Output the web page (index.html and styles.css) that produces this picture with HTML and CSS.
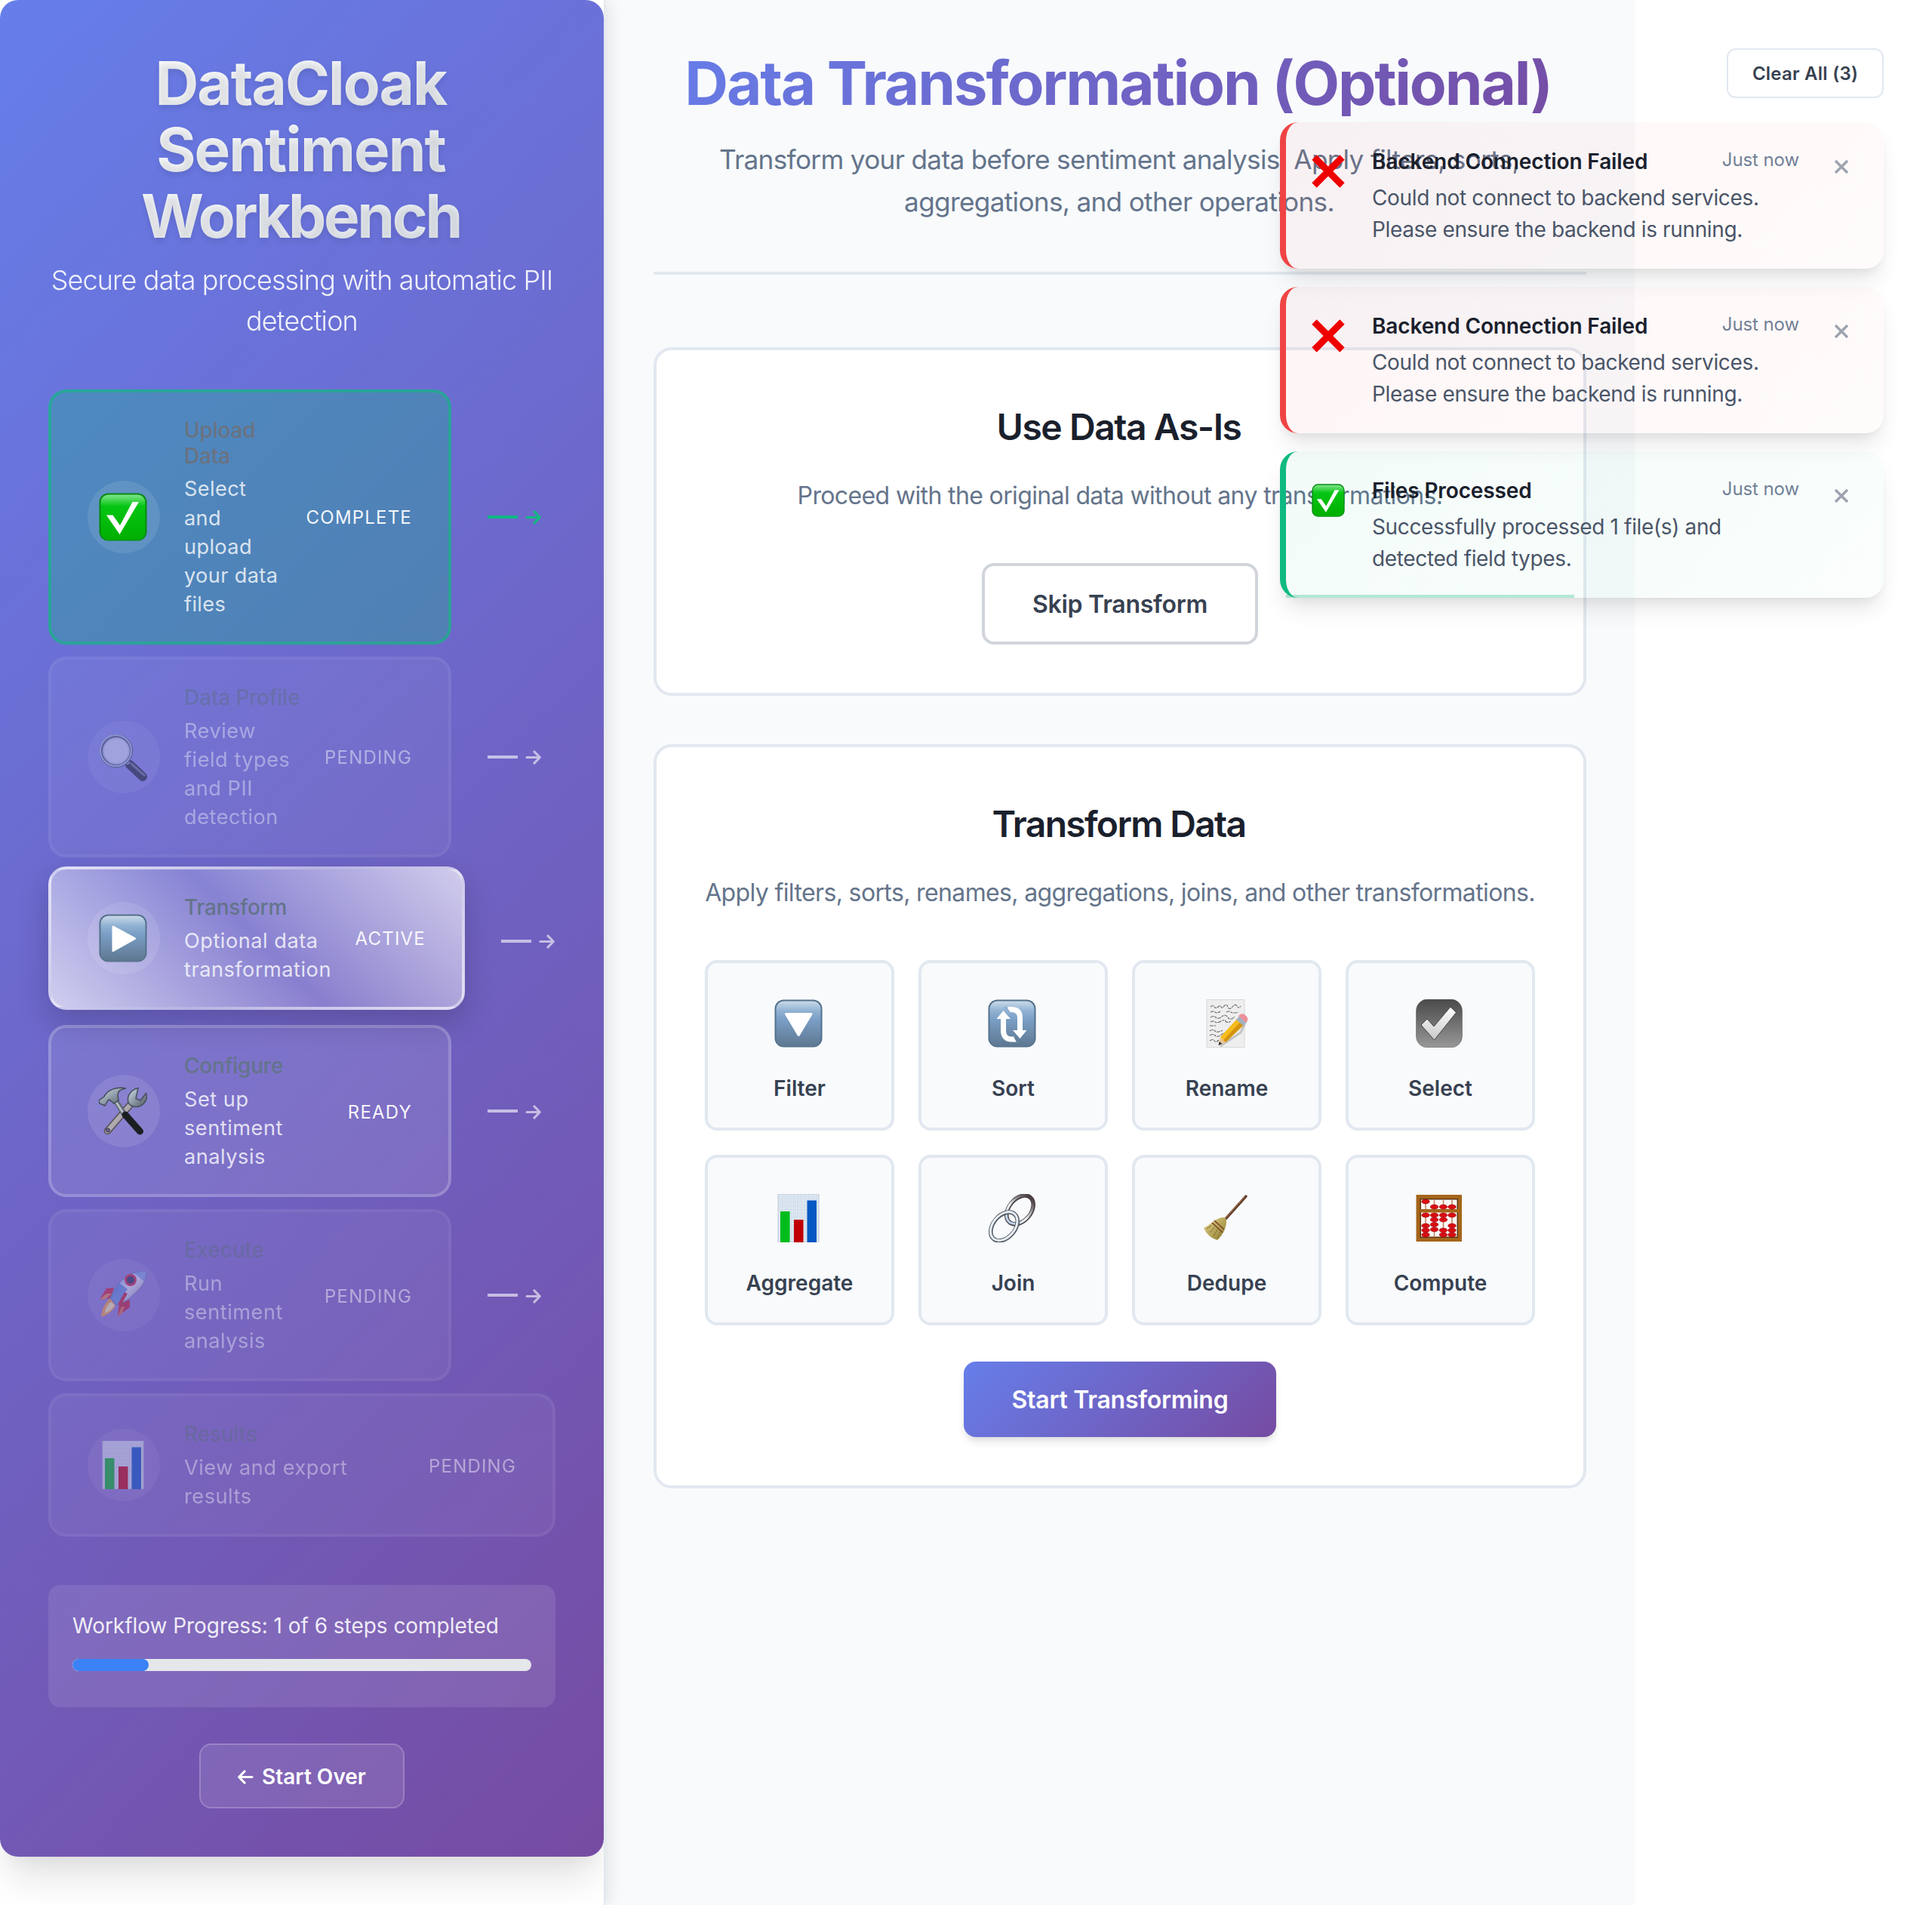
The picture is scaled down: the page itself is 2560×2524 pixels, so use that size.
FILE: index.html
```html
<!DOCTYPE html>
<html lang="en">
<head>
<meta charset="utf-8">
<title>DataCloak Sentiment Workbench</title>
<link rel="stylesheet" href="styles.css">
</head>
<body>
<svg class="sprite" aria-hidden="true">
  <defs>
    <linearGradient id="g-green" x1="0" y1="0" x2="0" y2="1"><stop offset="0" stop-color="#7fe58a"/><stop offset=".25" stop-color="#06c614"/><stop offset="1" stop-color="#00ae00"/></linearGradient>
    <linearGradient id="g-blue" x1="0" y1="0" x2="0" y2="1"><stop offset="0" stop-color="#c9dae8"/><stop offset=".22" stop-color="#8fb1d2"/><stop offset=".4" stop-color="#7b9fc6"/><stop offset="1" stop-color="#5d7790"/></linearGradient>
    <linearGradient id="g-gray" x1="0" y1="0" x2="0" y2="1"><stop offset="0" stop-color="#4a4a4a"/><stop offset="1" stop-color="#989898"/></linearGradient>
    <linearGradient id="g-tick" x1="0" y1="0" x2="0" y2="1"><stop offset="0" stop-color="#fff"/><stop offset="1" stop-color="#c8c8c8"/></linearGradient>
    <linearGradient id="g-steel" x1="0" y1="0" x2="1" y2="1"><stop offset="0" stop-color="#cfe0ea"/><stop offset=".5" stop-color="#8d9aa5"/><stop offset="1" stop-color="#4d5560"/></linearGradient>
    <linearGradient id="g-chrome" x1="0" y1="0" x2="1" y2="0"><stop offset="0" stop-color="#b9cfe6"/><stop offset=".4" stop-color="#f2f5f8"/><stop offset=".75" stop-color="#85868c"/><stop offset="1" stop-color="#4a3c3c"/></linearGradient>
    <linearGradient id="g-broom" x1="0" y1="0" x2="1" y2="1"><stop offset="0" stop-color="#e3d58a"/><stop offset="1" stop-color="#8f7a30"/></linearGradient>
    <linearGradient id="g-hull" x1="0" y1="0" x2="1" y2="1"><stop offset="0" stop-color="#4f8be0"/><stop offset=".5" stop-color="#e6ebf5"/><stop offset="1" stop-color="#6c7490"/></linearGradient>
    <pattern id="p-grid" width="2.5" height="2.5" patternUnits="userSpaceOnUse"><rect width="2.5" height="2.5" fill="#e4eef7"/><path d="M0 0H2.5M0 0V2.5" stroke="#b4c6d6" stroke-width=".7"/></pattern>

    <symbol id="i-check" viewBox="0 0 64 64">
      <rect x=".5" y=".5" width="63" height="63" rx="12" fill="#068a12"/>
      <rect x="2.5" y="2.5" width="59" height="60" rx="10" fill="url(#g-green)"/>
      <path d="M10 29.5h8.500L28 43 44.500 12H53L27.500 55z" fill="#fff"/>
    </symbol>
    <symbol id="i-search" viewBox="0 0 64 64">
      <path d="M41 42 58 58" stroke="#23262f" stroke-width="12" stroke-linecap="round"/>
      <path d="M43 41 60 56" stroke="#6a7286" stroke-width="3" stroke-linecap="round"/>
      <path d="M35 36 40 41" stroke="#8c93a5" stroke-width="5"/>
      <circle cx="23" cy="24" r="20" fill="#d3d9ea" stroke="#4f586c" stroke-width="4.500"/>
      <circle cx="22.500" cy="23.500" r="20.500" fill="none" stroke="#a9bdd6" stroke-width="2"/>
      <circle cx="23" cy="24" r="16.500" fill="none" stroke="#bcc4da" stroke-width="1.500"/>
    </symbol>
    <symbol id="i-play" viewBox="0 0 64 64">
      <rect x=".5" y=".5" width="63" height="63" rx="12" fill="#53718c"/>
      <rect x="2.500" y="2.500" width="59" height="60" rx="10" fill="url(#g-blue)"/>
      <path d="M19 17 47.500 32.500 19 48.500z" fill="#fff" stroke="#fff" stroke-width="3" stroke-linejoin="round"/>
    </symbol>
    <symbol id="i-tools" viewBox="0 0 64 64">
      <path d="M43 22 11.500 58.500" stroke="#554f52" stroke-width="9.500" stroke-linecap="round"/>
      <path d="M43 22 11.500 58.500" stroke="#aeaab0" stroke-width="6.500" stroke-linecap="round"/>
      <circle cx="12" cy="57.500" r="2.600" fill="#6b6090" stroke="#403c44"/>
      <path d="M52 1.500C42 4 36 13 39.500 21.500c4 6.500 14 6 18.500 2 4.500-4 7-9 4.500-15l-7.500 9.500-6-2.500z" fill="url(#g-steel)" stroke="#46505c" stroke-width="1.500"/>
      <path d="M22 18 36 40" stroke="#5f6870" stroke-width="7"/>
      <path d="M21.500 18 35 39" stroke="#b4bec6" stroke-width="3"/>
      <path d="M35 37 54.500 59" stroke="#1c1f22" stroke-width="9" stroke-linecap="round"/>
      <path d="M0 18 7 13C11 5 22-1 36 2c-7 1-11 4-11 9l1 7-6 4-6-5-2 1-4 7-7-3z" fill="url(#g-steel)" stroke="#434c56" stroke-width="1.500"/>
    </symbol>
    <symbol id="i-rocket" viewBox="0 0 64 64">
      <path d="M20 22 10 23 1 38l15-2z" fill="#d2222f"/><path d="M10 30 1 38l8-1 8-7z" fill="#e88a4a"/>
      <path d="M41 38v10L25 60l2-17z" fill="#c31e2c"/><path d="M30 47 25 60l6-4 3-9z" fill="#e07038"/>
      <path d="M15 36C8 42 4 50 3 61c7-2 15-7 19-15z" fill="#f4a63a"/><path d="M16 41c-5 4-7 8-8 15 5-2 10-5 13-11z" fill="#fff0a8"/>
      <path d="M63 0C47 0 36 6 27 16 22 22 18 30 15 36l9 9c8-3 17-8 22-14C57 22 63 13 63 0z" fill="url(#g-hull)" stroke="#6b7694"/>
      <path d="M27 16c-5 6-9 14-12 20l9 9 14-21z" fill="#3e77cf" opacity=".75"/>
      <path d="M63 0C57 0 52 1 47 3l13 11c2-4 3-9 3-14z" fill="#4b84dc" opacity=".6"/>
      <circle cx="42" cy="12" r="6.500" fill="#2b2f4e" stroke="#cf2335" stroke-width="3"/>
      <path d="M36 29 27 45" stroke="#c31e2c" stroke-width="4.500"/>
    </symbol>
    <symbol id="i-chart" viewBox="0 0 64 64">
      <rect x="5" y="0" width="54" height="64" fill="url(#p-grid)" stroke="#c4cdd5"/>
      <path d="M8 23h12.500v41H8z" fill="#00bd1c"/><path d="M26 34h12.500v30H26z" fill="#c00004"/><path d="M43.500 8.500H56V64H43.500z" fill="#0557c2"/>
    </symbol>
    <symbol id="i-filter" viewBox="0 0 64 64">
      <rect x=".5" y=".5" width="63" height="63" rx="12" fill="#53718c"/>
      <rect x="2.500" y="2.500" width="59" height="60" rx="10" fill="url(#g-blue)"/>
      <path d="M15.500 19.500h33.500L32.200 47.500z" fill="#fff" stroke="#fff" stroke-width="3" stroke-linejoin="round"/>
    </symbol>
    <symbol id="i-sort" viewBox="0 0 64 64">
      <rect x=".5" y=".5" width="63" height="63" rx="12" fill="#53718c"/>
      <rect x="2.500" y="2.500" width="59" height="60" rx="10" fill="url(#g-blue)"/>
      <path d="M20.500 24v18c0 7 4 11 11.500 11h6M42.500 42V24c0-7-4-10-10-10.500h-6" fill="none" stroke="#fff" stroke-width="7"/>
      <path d="M11.500 26 20.500 15l9.500 11zM33 41h18.500L42.500 52z" fill="#fff"/>
      <path d="M22 10l6 8" stroke="#8fb1d2" stroke-width="4"/>
      <path d="M36 49l5 9" stroke="#64809b" stroke-width="4"/>
    </symbol>
    <symbol id="i-memo" viewBox="0 0 64 64">
      <path d="M7 .5h50v63H7z" fill="#eeeeee" stroke="#d8d8d8"/>
      <path d="M12 10q3-3 5 0t5 0 4 0 4-1 5 1 6 0 6-1 5 0M12 17q3-2 6 0t7-1M33 17q3-2 6 0t10 0M12 24q4-3 7 0t8-1 8 1 9-1M12 30q3-2 6 0t8-1 6 0 8 0M11 35h8M11 42q4-3 7 0t10-1M11 48q4-3 7 0t8-1 6 0M11 55q4-3 6 0t6-1" fill="none" stroke="#666" stroke-width="1.100" stroke-dasharray="5 1 3 1"/>
      <path d="M25 62 52 44 60 27" stroke="#999" stroke-width="3" fill="none" opacity=".5"/>
      <path d="M22.500 60.500 25 50 32 57z" fill="#e9c691"/><path d="M22.500 61l1-5 4 3z" fill="#333"/>
      <path d="M25 50 47 26l9 8L32 57z" fill="#f7bc1c"/><path d="M29 54 51.500 30l4.500 4-24 23z" fill="#d59410"/>
      <path d="M46 27l4-4.500 9 8-3.500 4.500z" fill="#9fb3c4"/><path d="M49 22c4-4 7-3 10 0s3 5 0 9z" fill="#ee8f98"/>
    </symbol>
    <symbol id="i-select" viewBox="0 0 64 64">
      <rect x="1.500" width="61" height="64" rx="15" fill="url(#g-gray)" stroke="#555" stroke-width=".5"/>
      <path d="M8 34l8-8L25 36 47 10l7.500 7.500L25.500 54z" fill="url(#g-tick)" stroke="#444" stroke-width="1"/>
    </symbol>
    <symbol id="i-link" viewBox="0 0 64 64">
      <g fill="none">
        <ellipse cx="42.500" cy="21" rx="21.500" ry="14.500" stroke="#4a4246" stroke-width="5.500" transform="rotate(-50 42.500 21)"/>
        <ellipse cx="42.200" cy="20.600" rx="21.500" ry="14.500" stroke="url(#g-chrome)" stroke-width="3" transform="rotate(-50 42.200 20.600)"/>
        <ellipse cx="21.500" cy="43" rx="21.500" ry="14.500" stroke="#50565f" stroke-width="5.500" transform="rotate(-50 21.500 43)"/>
        <ellipse cx="21.200" cy="42.600" rx="21.500" ry="14.500" stroke="#e6edf4" stroke-width="3" transform="rotate(-50 21.200 42.600)"/>
      </g>
    </symbol>
    <symbol id="i-broom" viewBox="0 0 64 64">
      <path d="M59 3 31 34" stroke="#5b3826" stroke-width="3.400" stroke-linecap="round"/><path d="M58 3 31 33" stroke="#9a6746" stroke-width="1.200"/>
      <path d="M28 31q5 0 5 5c0 8-4 18-12 25C14 59 7 54 3 45c8-3 15-13 25-14z" fill="url(#g-broom)"/>
      <path d="M17 35 30 47M14 38 28 51" stroke="#7a4423" stroke-width="1.600"/>
      <path d="M7 46l6-4M11 51l6-7M16 56l5-9M21 59l4-9" stroke="#85712e" stroke-width="1"/>
    </symbol>
    <symbol id="i-abacus" viewBox="0 0 64 64">
      <path d="M1.500 1h60.500v62H1.500z" fill="#a4651b"/><path d="M6.500 6h50.500v52H6.500z" fill="#5c3610"/><path d="M8 7.500h47.500v49H8z" fill="#fbf8f6"/>
      <path d="M14 7v50M25.500 7v50M37.500 7v50M49 7v50" stroke="#c08767" stroke-width="1.600"/>
      <path d="M6.500 20h50.500v4.500H6.500z" fill="#a4651b"/>
      <g fill="#d90d12" stroke="#9c0408" stroke-width=".6">
        <ellipse cx="14" cy="10" rx="5.300" ry="2.900"/><ellipse cx="25.500" cy="17" rx="5.300" ry="2.900"/><ellipse cx="37.500" cy="17" rx="5.300" ry="2.900"/><ellipse cx="49" cy="17" rx="5.300" ry="2.900"/>
        <ellipse cx="14" cy="28" rx="5.300" ry="2.900"/><ellipse cx="25.500" cy="28" rx="5.300" ry="2.900"/><ellipse cx="37.500" cy="28" rx="5.300" ry="2.900"/><ellipse cx="49" cy="28" rx="5.300" ry="2.900"/>
        <ellipse cx="25.500" cy="34" rx="5.300" ry="2.900"/><ellipse cx="37.500" cy="34" rx="5.300" ry="2.900"/><ellipse cx="25.500" cy="40.500" rx="5.300" ry="2.900"/><ellipse cx="25.500" cy="47" rx="5.300" ry="2.900"/>
        <ellipse cx="14" cy="42" rx="5.300" ry="2.900"/><ellipse cx="14" cy="48" rx="5.300" ry="2.900"/><ellipse cx="14" cy="54" rx="5.300" ry="2.900"/>
        <ellipse cx="37.500" cy="48" rx="5.300" ry="2.900"/><ellipse cx="37.500" cy="54" rx="5.300" ry="2.900"/>
        <ellipse cx="49" cy="42" rx="5.300" ry="2.900"/><ellipse cx="49" cy="48" rx="5.300" ry="2.900"/><ellipse cx="49" cy="54" rx="5.300" ry="2.900"/>
      </g>
    </symbol>
    <symbol id="i-cross" viewBox="0 0 44 44">
      <path d="M3.500 3.500 40.500 40.500M40.500 3.500 3.500 40.500" stroke="#ee0000" stroke-width="9"/>
    </symbol>
    <symbol id="i-close" viewBox="0 0 20 20">
      <path d="M2 2 18 18M18 2 2 18" stroke="#9ca3af" stroke-width="3.400"/>
    </symbol>
    <symbol id="i-arrow" viewBox="0 0 22 20">
      <path d="M2 10H20M12.500 2 20.300 10 12.500 18" fill="none" stroke="currentColor" stroke-width="3.200" stroke-linecap="round" stroke-linejoin="round"/>
    </symbol>
  </defs>
</svg>

<aside class="sidebar">
  <div class="workflow">
    <h1 class="brand">DataCloak Sentiment <span>Workbench</span></h1>
    <p class="tagline">Secure data processing with automatic PII detection</p>

    <div class="steps">
      <div class="row">
        <div class="step complete">
          <span class="bubble"><svg class="icon"><use href="#i-check"/></svg></span>
          <div class="info"><h3>Upload Data</h3><p>Select and upload your data files</p></div>
          <span class="status">COMPLETE</span>
        </div>
        <div class="link done"><i></i><svg><use href="#i-arrow"/></svg></div>
      </div>
      <div class="row">
        <div class="step pending">
          <span class="bubble"><svg class="icon"><use href="#i-search"/></svg></span>
          <div class="info"><h3 class="single">Data Profile</h3><p>Review field types and PII detection</p></div>
          <span class="status">PENDING</span>
        </div>
        <div class="link"><i></i><svg><use href="#i-arrow"/></svg></div>
      </div>
      <div class="row">
        <div class="step active">
          <span class="bubble"><svg class="icon"><use href="#i-play"/></svg></span>
          <div class="info"><h3>Transform</h3><p>Optional data transformation</p></div>
          <span class="status">ACTIVE</span>
        </div>
        <div class="link"><i></i><svg><use href="#i-arrow"/></svg></div>
      </div>
      <div class="row">
        <div class="step">
          <span class="bubble"><svg class="icon"><use href="#i-tools"/></svg></span>
          <div class="info"><h3>Configure</h3><p>Set up sentiment analysis</p></div>
          <span class="status">READY</span>
        </div>
        <div class="link"><i></i><svg><use href="#i-arrow"/></svg></div>
      </div>
      <div class="row">
        <div class="step pending">
          <span class="bubble"><svg class="icon"><use href="#i-rocket"/></svg></span>
          <div class="info"><h3>Execute</h3><p>Run sentiment analysis</p></div>
          <span class="status">PENDING</span>
        </div>
        <div class="link"><i></i><svg><use href="#i-arrow"/></svg></div>
      </div>
      <div class="row">
        <div class="step pending last">
          <span class="bubble"><svg class="icon"><use href="#i-chart"/></svg></span>
          <div class="info"><h3>Results</h3><p>View and export results</p></div>
          <span class="status">PENDING</span>
        </div>
      </div>
    </div>

    <div class="progress">
      <p>Workflow Progress: 1 of 6 steps completed</p>
      <div class="track"><div class="fill" style="width:16.667%"></div></div>
    </div>

    <button class="restart"><svg><use href="#i-arrow"/></svg><span>Start Over</span></button>
  </div>
</aside>

<main class="main">
  <header class="header">
    <h1>Data Transformation (Optional)</h1>
    <p>Transform your data before sentiment analysis. Apply filters, sorts, aggregations, and other operations.</p>
  </header>

  <section class="card">
    <h2>Use Data As-Is</h2>
    <p>Proceed with the original data without any transformations.</p>
    <button class="btn outline">Skip Transform</button>
  </section>

  <section class="card">
    <h2 class="tight">Transform Data</h2>
    <p>Apply filters, sorts, renames, aggregations, joins, and other transformations.</p>
    <div class="ops">
      <div class="op"><svg class="icon"><use href="#i-filter"/></svg><span>Filter</span></div>
      <div class="op"><svg class="icon"><use href="#i-sort"/></svg><span>Sort</span></div>
      <div class="op"><svg class="icon"><use href="#i-memo"/></svg><span>Rename</span></div>
      <div class="op"><svg class="icon"><use href="#i-select"/></svg><span>Select</span></div>
      <div class="op"><svg class="icon"><use href="#i-chart"/></svg><span>Aggregate</span></div>
      <div class="op"><svg class="icon"><use href="#i-link"/></svg><span>Join</span></div>
      <div class="op"><svg class="icon"><use href="#i-broom"/></svg><span>Dedupe</span></div>
      <div class="op"><svg class="icon"><use href="#i-abacus"/></svg><span>Compute</span></div>
    </div>
    <button class="btn primary">Start Transforming</button>
  </section>
</main>

<div class="toasts">
  <button class="clear">Clear All (3)</button>
  <div class="toast error">
    <svg class="mark"><use href="#i-cross"/></svg>
    <div class="message"><h4>Backend Connection Failed</h4><p>Could not connect to backend services. Please ensure the backend is running.</p></div>
    <time>Just now</time>
    <svg class="close"><use href="#i-close"/></svg>
  </div>
  <div class="toast error">
    <svg class="mark"><use href="#i-cross"/></svg>
    <div class="message"><h4>Backend Connection Failed</h4><p>Could not connect to backend services. Please ensure the backend is running.</p></div>
    <time>Just now</time>
    <svg class="close"><use href="#i-close"/></svg>
  </div>
  <div class="toast success">
    <svg class="mark"><use href="#i-check"/></svg>
    <div class="message"><h4>Files Processed</h4><p>Successfully processed 1 file(s) and detected field types.</p></div>
    <time>Just now</time>
    <svg class="close"><use href="#i-close"/></svg>
    <div class="timer" style="width:382px"></div>
  </div>
</div>
</body>
</html>
```
FILE: styles.css
```css
* { box-sizing: border-box; margin: 0; padding: 0; }

body {
  display: flex;
  position: relative;
  width: 2560px;
  height: 2524px;
  overflow: hidden;
  background: #fff;
  font-family: Inter, "Liberation Sans", sans-serif;
  color: #1a202c;
}

button { font-family: inherit; }
svg { display: block; overflow: visible; }
.sprite { position: absolute; width: 0; height: 0; }
.icon { width: 64px; height: 64px; }

/* Sidebar */
.sidebar {
  position: relative;
  z-index: 1;
  flex: none;
  width: 802px;
  height: 2524px;
  background: #fff;
  border-right: 2px solid #e2e8f0;
  box-shadow: 4px 0 20px rgba(0, 0, 0, .1);
}
.workflow {
  display: flex;
  flex-direction: column;
  height: 2460px;
  padding: 64px;
  border-radius: 24px;
  background: linear-gradient(135deg, #667eea 0%, #764ba2 100%);
  box-shadow: 0 40px 50px -10px rgba(0, 0, 0, .1), 0 20px 20px -10px rgba(0, 0, 0, .04);
  clip-path: inset(0 0 -64px 0);
  color: #fff;
}
.brand {
  padding: 2px 3px 0 0;
  font-size: 80px;
  line-height: 88px;
  font-weight: 700;
  letter-spacing: -.025em;
  text-align: center;
  color: transparent;
  background: linear-gradient(135deg, #fff 0%, #e2e8f0 100%);
  background-clip: text;
  text-shadow: 0 4px 8px rgba(0, 0, 0, .1);
}
.brand span { letter-spacing: -.042em; }
.tagline {
  margin: 14px 0 64px;
  font-size: 36px;
  line-height: 54px;
  font-weight: 300;
  letter-spacing: -.024em;
  text-align: center;
  opacity: .9;
}

.steps { display: flex; flex-direction: column; gap: 16px; }
.row { display: flex; align-items: center; }
.step {
  display: flex;
  flex: none;
  align-items: center;
  gap: 32px;
  width: 534px;
  padding: 32px 48px;
  border: 4px solid rgba(255, 255, 255, .2);
  border-radius: 24px;
  background: rgba(255, 255, 255, .1);
}
.bubble {
  display: grid;
  flex: none;
  place-items: center;
  width: 96px;
  height: 96px;
  padding-right: 2px;
  border-radius: 50%;
  background: rgba(255, 255, 255, .1);
}
.info { flex: 1; min-width: 0; padding-top: 2px; margin-bottom: -2px; }
.info h3 {
  margin-bottom: 8.25px;
  font-size: 28px;
  line-height: 33.6px;
  font-weight: 500;
  letter-spacing: -.2px;
  color: #64748b;
}
.info .single { white-space: nowrap; }
.info p {
  font-size: 27.2px;
  line-height: 38.08px;
  letter-spacing: .5px;
  color: rgba(255, 255, 255, .8);
}
.status {
  padding-top: 2px;
  font-size: 24px;
  font-weight: 400;
  letter-spacing: .05em;
  color: rgba(255, 255, 255, .95);
}
.step.complete { border-color: rgba(16, 185, 129, .6); background: rgba(16, 185, 129, .3); }
.step.complete h3 { color: #6b7280; }
.step.complete p { letter-spacing: .35px; }
.step.pending { border-color: rgba(255, 255, 255, .1); opacity: .5; }
.step.active {
  width: 552px;
  border-color: rgba(255, 255, 255, .4);
  background: linear-gradient(45deg, rgba(255, 255, 255, .68), rgba(255, 255, 255, .18) 50%, rgba(255, 255, 255, .68));
  box-shadow: 0 16px 40px rgba(0, 0, 0, .18);
  transform: translateY(-4px);
}
.step.last { width: 672px; }
.link {
  display: flex;
  align-items: center;
  gap: 10px;
  padding-left: 48px;
  color: rgba(255, 255, 255, .6);
}
.link i { width: 40px; height: 4px; background: currentColor; }
.link svg { width: 21px; height: 19px; margin-top: 2px; }
.link.done { color: #10b981; }

.progress {
  flex: none;
  height: 162px;
  margin-top: 64px;
  padding: 32px;
  border-radius: 16px;
  background: rgba(255, 255, 255, .1);
}
.progress p { padding-top: 1px; margin-bottom: 23px; font-size: 28px; line-height: 42px; letter-spacing: -.04px; color: rgba(255, 255, 255, .9); }
.track { height: 16px; border-radius: 8px; background: #e5e7eb; overflow: hidden; }
.fill { height: 16px; border-radius: 8px; background: #3b82f6; }

.restart {
  display: flex;
  flex: none;
  align-items: center;
  justify-content: center;
  gap: 11px;
  width: 272px;
  height: 86px;
  margin: 48px auto 0;
  padding-top: 2px;
  border: 2px solid rgba(255, 255, 255, .2);
  border-radius: 16px;
  background: rgba(255, 255, 255, .1);
  font-size: 28px;
  font-weight: 600;
  color: #fff;
}
.restart svg { width: 21px; height: 19px; transform: scaleX(-1); }

/* Main panel */
.main {
  flex: none;
  width: 1364px;
  height: 2524px;
  padding: 64px;
  background: #f8fafc;
  text-align: center;
}
.header { height: 300px; margin-bottom: 96px; border-bottom: 4px solid #e2e8f0; }
.header h1 {
  padding: 2px 5px 0 0;
  font-size: 80px;
  line-height: 88px;
  font-weight: 700;
  letter-spacing: -.027em;
  color: transparent;
  background: linear-gradient(135deg, #667eea 0%, #764ba2 100%);
  background-clip: text;
}
.header p {
  max-width: 1200px;
  margin: 29px auto 0;
  padding-right: 2px;
  font-size: 35.2px;
  line-height: 56px;
  letter-spacing: -.0195em;
  color: #64748b;
}

.card {
  margin-bottom: 64px;
  padding: 64px;
  border: 4px solid #e2e8f0;
  border-radius: 24px;
  background: #fff;
}
.card h2 { padding: 2px 3px 0 0; margin-bottom: 30px; font-size: 48px; line-height: 72px; font-weight: 600; letter-spacing: -.03em; color: #1a202c; }
.card .tight { letter-spacing: -.035em; }
.card > p { margin-bottom: 64px; font-size: 32px; line-height: 50px; letter-spacing: -.0197em; color: #64748b; white-space: nowrap; }

.btn {
  display: block;
  margin: 0 auto;
  border-radius: 16px;
  font-size: 32px;
  font-weight: 600;
  letter-spacing: -.008em;
}
.outline { width: 366px; height: 108px; border: 4px solid #d1d5db; background: #fff; color: #374151; }
.primary {
  width: 414px;
  height: 100px;
  border: 0;
  background: linear-gradient(135deg, #667eea 0%, #764ba2 100%);
  box-shadow: 0 8px 12px -2px rgba(0, 0, 0, .1), 0 4px 8px -2px rgba(0, 0, 0, .06);
  color: #fff;
}

.ops { display: grid; grid-template-columns: repeat(4, 1fr); gap: 32px; margin-bottom: 48px; }
.op {
  display: flex;
  flex-direction: column;
  align-items: center;
  height: 226px;
  padding-top: 48px;
  border: 4px solid #e2e8f0;
  border-radius: 16px;
  background: #f8fafc;
  font-size: 28px;
  line-height: 42px;
  font-weight: 600;
  color: #374151;
}
.op .icon { margin: 0 3px 33px 0; }

/* Notifications */
.toasts {
  position: absolute;
  z-index: 2;
  top: 64px;
  right: 64px;
  display: flex;
  flex-direction: column;
  align-items: flex-end;
  gap: 24px;
  width: 800px;
}
.clear {
  width: 208px;
  height: 66px;
  margin-bottom: 8px;
  border: 2px solid #e2e8f0;
  border-radius: 12px;
  background: #fff;
  font-size: 24px;
  font-weight: 600;
  letter-spacing: .25px;
  color: #374151;
}
.toast {
  position: relative;
  display: flex;
  width: 800px;
  height: 194px;
  padding: 32px 46px 32px 34px;
  border-left: 8px solid;
  border-radius: 24px;
  box-shadow: 0 20px 30px -6px rgba(0, 0, 0, .1), 0 8px 12px -4px rgba(0, 0, 0, .05);
}
.error { border-color: #ef4444; background: linear-gradient(135deg, rgba(239, 68, 68, .05), rgba(239, 68, 68, .02)); }
.success { border-color: #10b981; background: linear-gradient(135deg, rgba(16, 185, 129, .05), rgba(16, 185, 129, .02)); }
.mark { flex: none; width: 44px; height: 44px; margin: 11px 36px 0 0; }
.message { flex: 1; padding-top: 1px; }
.message h4 { margin-bottom: 8px; font-size: 28px; line-height: 38px; font-weight: 600; letter-spacing: -.12px; color: #1a202c; }
.message p { width: 540px; font-size: 28px; line-height: 42px; letter-spacing: -.36px; color: #4a5568; }
.toast time { position: absolute; right: 112px; top: 33px; font-size: 24px; line-height: 34px; letter-spacing: -.1px; color: #718096; }
.close { flex: none; width: 20px; height: 20px; margin-top: 17px; }
.timer { position: absolute; left: 0; bottom: 0; height: 4px; background: #10b981; opacity: .3; }
```
